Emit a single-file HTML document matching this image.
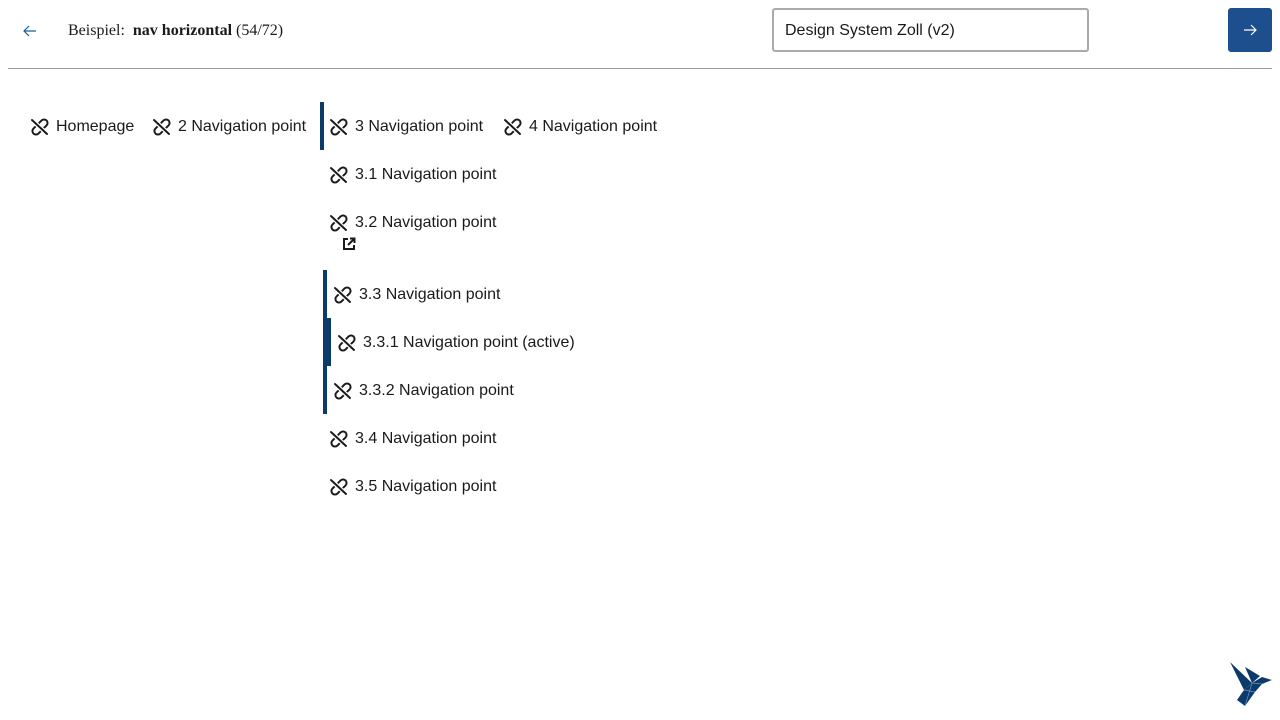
<!DOCTYPE html>
<html><head><meta charset="utf-8"><style>
body{margin:0;width:1280px;height:720px;background:#fff;font-family:"Liberation Sans",sans-serif;color:#1a1a1a;position:relative;overflow:hidden}
.a{position:absolute}
.it{position:absolute;font-size:16px;line-height:20px;display:flex;align-items:center;white-space:nowrap}
.it svg{margin-right:6px}
.bar{position:absolute;background:#0b3a6b}
</style></head><body>
<svg class="a" style="left:22px;top:23px" width="16" height="16" viewBox="0 0 16 16"><path d="M14 8H2M7 3L2 8l5 5" fill="none" stroke="#1b5aa5" stroke-width="1.2"/></svg>
<div class="a" style="left:68px;top:21px;font-family:'Liberation Serif',serif;font-size:16px;line-height:20px">Beispiel:&nbsp; <b>nav horizontal</b> (54/72)</div>
<div class="a" style="left:772px;top:8px;width:313px;height:40px;border:2px solid #aaa;border-radius:3px"></div>
<div class="a" style="left:785px;top:21px;font-size:16px;line-height:20px">Design System Zoll (v2)</div>
<div class="a" style="left:1228px;top:8px;width:44px;height:44px;background:#1d4f8f;border-radius:3px"></div>
<svg class="a" style="left:1242px;top:22px" width="16" height="16" viewBox="0 0 16 16"><path d="M2 8h12M9 3l5 5-5 5" fill="none" stroke="#fff" stroke-width="1.2"/></svg>
<div class="a" style="left:8px;top:68px;width:1264px;height:1px;background:#999"></div>

<svg width="0" height="0" style="position:absolute"><defs><g id="lo" fill="none" stroke="#1a1a1a" stroke-width="2" stroke-linecap="round">
<rect x="9.5" y="2" width="7" height="10" rx="3.5" transform="rotate(45 13 7)"/>
<rect x="3.5" y="8" width="7" height="10" rx="3.5" transform="rotate(45 7 13)"/>
<path d="M2 3l15 14" stroke="#fff" stroke-width="4.5"/>
<path d="M2 3l15 14"/>
</g></defs></svg>

<div class="it" style="left:30px;top:117px"><svg width="20" height="20" viewBox="0 0 20 20"><use href="#lo"/></svg>Homepage</div>
<div class="it" style="left:152px;top:117px"><svg width="20" height="20" viewBox="0 0 20 20"><use href="#lo"/></svg>2 Navigation point</div>
<div class="bar" style="left:320px;top:102px;width:4px;height:48px"></div>
<div class="it" style="left:329px;top:117px"><svg width="20" height="20" viewBox="0 0 20 20"><use href="#lo"/></svg>3 Navigation point</div>
<div class="it" style="left:503px;top:117px"><svg width="20" height="20" viewBox="0 0 20 20"><use href="#lo"/></svg>4 Navigation point</div>
<div class="it" style="left:329px;top:165px"><svg width="20" height="20" viewBox="0 0 20 20"><use href="#lo"/></svg>3.1 Navigation point</div>
<div class="it" style="left:329px;top:213px"><svg width="20" height="20" viewBox="0 0 20 20"><use href="#lo"/></svg>3.2 Navigation point</div>
<svg class="a" style="left:342px;top:237px" width="14" height="14" viewBox="0 0 14 14"><path d="M6 2H2v10h10V8M8 1.5h4.5V6M12.5 1.5L6 8" fill="none" stroke="#1a1a1a" stroke-width="2"/></svg>
<div class="bar" style="left:323px;top:270px;width:4px;height:144px"></div>
<div class="it" style="left:333px;top:285px"><svg width="20" height="20" viewBox="0 0 20 20"><use href="#lo"/></svg>3.3 Navigation point</div>
<div class="bar" style="left:327px;top:318px;width:4px;height:48px"></div>
<div class="it" style="left:337px;top:333px"><svg width="20" height="20" viewBox="0 0 20 20"><use href="#lo"/></svg>3.3.1 Navigation point (active)</div>
<div class="it" style="left:333px;top:381px"><svg width="20" height="20" viewBox="0 0 20 20"><use href="#lo"/></svg>3.3.2 Navigation point</div>
<div class="it" style="left:329px;top:429px"><svg width="20" height="20" viewBox="0 0 20 20"><use href="#lo"/></svg>3.4 Navigation point</div>
<div class="it" style="left:329px;top:477px"><svg width="20" height="20" viewBox="0 0 20 20"><use href="#lo"/></svg>3.5 Navigation point</div>

<svg class="a" style="left:0;top:0" width="1280" height="720" viewBox="0 0 1280 720">
<g fill="#0b3a6b">
<path d="M1230 662L1252 683L1244 690Z"/>
<path d="M1245 667L1252 683L1260 676Z"/>
<path d="M1252 683L1262 677L1272 680L1262 684L1255 692L1245 706L1237 700L1244 690Z"/>
</g>
<path d="M1252 683L1245 706M1244 690L1255 692M1252 683L1262 684" stroke="#6f95c2" stroke-width=".7" fill="none"/>
</svg>
</body></html>
